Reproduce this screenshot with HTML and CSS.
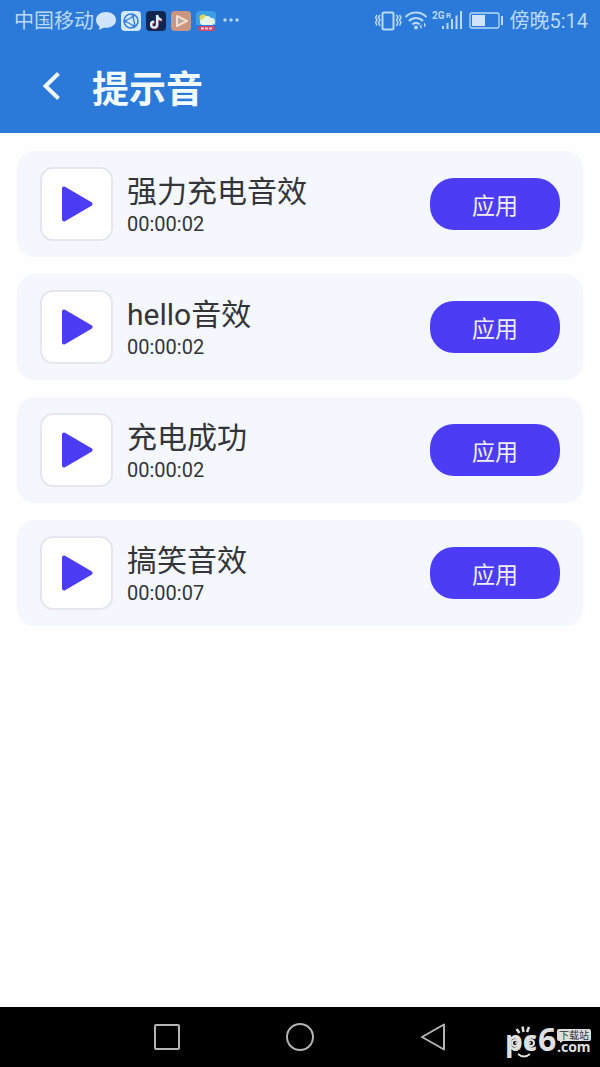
FILE: index.html
```html
<!DOCTYPE html>
<html lang="zh-CN">
<head>
<meta charset="utf-8">
<meta name="viewport" content="width=device-width, initial-scale=1">
<title>提示音</title>
<link rel="stylesheet" href="styles.css">
</head>
<body>
<div class="screen">
  <header class="top">
    <div class="status">
      <div class="status-side">
        <span>中国移动</span>
        <svg class="notices" width="146" height="22" viewBox="0 0 146 22" aria-hidden="true">
          <path d="M10 2C4.500 2 0 5.500 0 10c0 3 1.500 5 3.500 6.500L3 20l4.500-2.300C15 18.500 20 15 20 10S15.500 2 10 2z" fill="#cfe5fb"/>
          <rect x="25" y="1" width="20" height="20" rx="4" fill="#d3e8fb"/>
          <circle cx="35" cy="11" r="7" fill="none" stroke="#327fdc" stroke-width="1.500"/>
          <path d="M29 11l8-4.500M29 11l9 5M37 6.500l2 9" fill="none" stroke="#327fdc" stroke-width="1.300"/>
          <circle cx="29.500" cy="11" r="1.500" fill="#327fdc"/><circle cx="37" cy="6" r="1.500" fill="#327fdc"/><circle cx="38" cy="16" r="1.500" fill="#327fdc"/>
          <rect x="50" y="1" width="20" height="20" rx="4" fill="#11264f"/>
          <path d="M61 5v9.500a3 3 0 1 1-3-3M61 5c.500 3 2 4.500 4.500 4.700" fill="none" stroke="#e05b7d" stroke-width="2.400" transform="translate(.7 .6)"/>
          <path d="M61 5v9.500a3 3 0 1 1-3-3M61 5c.500 3 2 4.500 4.500 4.700" fill="none" stroke="#d8f3fb" stroke-width="2.200"/>
          <rect x="75" y="1" width="20" height="20" rx="4" fill="#c9967f"/>
          <path d="M81 6l10 5-10 5z" fill="#b7a69f" stroke="#f2ddd0" stroke-width="2" stroke-linejoin="round"/>
          <rect x="100" y="1" width="20" height="20" rx="4" fill="#3da0e4"/>
          <path d="M100 15h20v2a4 4 0 0 1-4 4h-12a4 4 0 0 1-4-4z" fill="#2878d7"/>
          <circle cx="107" cy="8" r="3.500" fill="#e2d65b"/>
          <path d="M107 15a3 3 0 0 1 0-6 4.500 4.500 0 0 1 8-1 3.500 3.500 0 0 1 1 7z" fill="#e5f5e7"/>
          <rect x="102" y="16" width="17" height="5" rx="2" fill="#c94769"/>
          <path d="M105 18.500h11" stroke="#f2cbdc" stroke-width="2" stroke-dasharray="3 1"/>
          <g fill="#b9dafa"><circle cx="129" cy="10" r="1.700"/><circle cx="135" cy="10" r="1.700"/><circle cx="141" cy="10" r="1.700"/></g>
        </svg>
      </div>
      <div class="status-side">
        <svg width="132" height="24" viewBox="1 0 132 24" fill="none" stroke="#b9dafa" aria-hidden="true">
          <rect x="8.500" y="3.500" width="11" height="17" rx="1.500" stroke-width="2"/>
          <path d="M3 6L1.500 8.500 3 11l-1.500 2.500L3 16.500M6 6L4.500 8.500 6 11l-1.500 2.500L6 17M22.500 6L24 8.500 22.500 11l1.500 2.500-1.500 3.500M25.500 6L27 8.500 25.500 11l1.500 2.500-1.500 3" stroke-width="1.500"/>
          <path d="M31.500 8c6-6 15-6 21 0M35 12c4-4 10-4 14 0M38.500 15.500c2-2.300 5-2.300 7 0" stroke-width="2.200"/>
          <circle cx="42" cy="18.500" r="1.900" fill="#b9dafa" stroke="none"/>
          <path d="M47.500 15v5l-2-2.500zM50 13.500v5l2-2.500z" fill="#b9dafa" stroke="none"/>
          <g fill="#b9dafa" stroke="none" class="network"><text x="58" y="10">2G</text><text x="72" y="9" class="roaming">R</text></g>
          <path d="M69 17v3M73.500 14v6M78 10v10M82.500 6.500V20M87 2v18" stroke-width="2"/>
          <rect x="96" y="4" width="29" height="15" rx="2" stroke-width="1.300"/>
          <path d="M98 6h13v11H98z" fill="#cfe5fb" stroke="none"/><path d="M128 7v9" stroke-width="2"/>
        </svg>
        <time class="clock">傍晚5:14</time>
      </div>
    </div>
    <div class="titlebar">
      <button class="back" aria-label="返回">
        <svg width="18" height="30" viewBox="0 0 18 30" aria-hidden="true"><path d="M16.500 2.500L3.500 15l13 12.500" fill="none" stroke="#f1faff" stroke-width="4"/></svg>
      </button>
      <h1>提示音</h1>
    </div>
  </header>

  <main class="sounds">
    <article class="card">
      <button class="play" aria-label="播放 强力充电音效"><svg width="32" height="36" viewBox="0 0 32 36" aria-hidden="true"><path d="M3 2.500v31L29.500 18z"/></svg></button>
      <div class="info"><h2>强力充电音效</h2><p>00:00:02</p></div>
      <button class="apply">应用</button>
    </article>
    <article class="card">
      <button class="play" aria-label="播放 hello音效"><svg width="32" height="36" viewBox="0 0 32 36" aria-hidden="true"><path d="M3 2.500v31L29.500 18z"/></svg></button>
      <div class="info"><h2>hello音效</h2><p>00:00:02</p></div>
      <button class="apply">应用</button>
    </article>
    <article class="card">
      <button class="play" aria-label="播放 充电成功"><svg width="32" height="36" viewBox="0 0 32 36" aria-hidden="true"><path d="M3 2.500v31L29.500 18z"/></svg></button>
      <div class="info"><h2>充电成功</h2><p>00:00:02</p></div>
      <button class="apply">应用</button>
    </article>
    <article class="card">
      <button class="play" aria-label="播放 搞笑音效"><svg width="32" height="36" viewBox="0 0 32 36" aria-hidden="true"><path d="M3 2.500v31L29.500 18z"/></svg></button>
      <div class="info"><h2>搞笑音效</h2><p>00:00:07</p></div>
      <button class="apply">应用</button>
    </article>
  </main>

  <nav class="navbar" aria-label="系统导航">
    <button aria-label="最近任务"><svg width="30" height="30" viewBox="0 0 30 30"><rect x="3" y="3" width="24" height="24" rx="1"/></svg></button>
    <button aria-label="主屏幕"><svg width="30" height="30" viewBox="0 0 30 30"><circle cx="15" cy="15" r="13"/></svg></button>
    <button aria-label="返回"><svg width="30" height="30" viewBox="0 0 30 30"><path d="M26 2.500v25L4 15z"/></svg></button>
    <div class="watermark">
      <svg width="88" height="52" viewBox="0 -12 88 52" role="img" aria-label="pc6下载站.com">
        <g class="logo-type">
          <text x="0" y="27" class="logo-main">pc</text>
          <text x="33" y="27" class="logo-six">6</text>
          <text x="52" y="28" class="logo-com">.com</text>
        </g>
        <path d="M14.500 9l-3-4M18.500 8l-1-5.500M22 8l2-5" stroke="#e0e0e0" stroke-width="2.500"/>
        <path d="M13 30q6 5 12 0" fill="none" stroke="#e0e0e0" stroke-width="2"/>
        <circle cx="10" cy="19" r="3" fill="#111" stroke="#e0e0e0" stroke-width="2"/><circle cx="26" cy="19" r="3" fill="#111" stroke="#e0e0e0" stroke-width="2"/>
        <circle cx="11" cy="19" r="1" fill="#e0e0e0"/><circle cx="25" cy="19" r="1" fill="#e0e0e0"/>
        <path d="M54 5h30a2 2 0 0 1 2 2v8a2 2 0 0 1-2 2H58l-3 2v-2h-1a2 2 0 0 1-2-2V7a2 2 0 0 1 2-2z" fill="#dedede"/>
        <text x="54" y="15" class="logo-tag">下载站</text>
      </svg>
    </div>
  </nav>
</div>
</body>
</html>
```

FILE: styles.css
```css
* { box-sizing: border-box; }

body {
  margin: 0;
  background: #fefefe;
  color: #333539;
  font-family: Roboto, "Noto Sans CJK SC", sans-serif;
}

button {
  padding: 0;
  border: 0;
  background: none;
  color: inherit;
  font: inherit;
  cursor: pointer;
}

svg { display: block; flex: none; }
h1, h2, p { margin: 0; }

.screen {
  min-height: 100vh;
  display: flex;
  flex-direction: column;
}

.top { background: #2b79d9; }

.status {
  height: 42px;
  padding: 0 12px 0 14px;
  display: flex;
  align-items: center;
  justify-content: space-between;
  color: #b9dafa;
  font-size: 20px;
  line-height: 24px;
}

.status-side {
  display: flex;
  align-items: center;
  gap: 2px;
}

.network { font-size: 10px; font-weight: 700; }
.roaming { font-size: 8px; }

.titlebar {
  height: 91px;
  padding: 0 42px 4px;
  display: flex;
  align-items: center;
  gap: 32px;
  color: #f1faff;
}

.titlebar h1 {
  padding-top: 10px;
  font-size: 37px;
  line-height: 44px;
  font-weight: 700;
}

.sounds {
  flex: 1;
  padding: 18px 17px;
  display: flex;
  flex-direction: column;
  gap: 17px;
}

.card {
  padding: 16px 23px;
  display: flex;
  align-items: center;
  gap: 14px;
  border-radius: 18px;
  background: #f4f7fe;
}

.play {
  width: 73px;
  height: 74px;
  display: grid;
  place-items: center;
  border: 2px solid #e6e6ec;
  border-radius: 13px;
  background: #fff;
}

.play path {
  fill: #4c3cf6;
  stroke: #4c3cf6;
  stroke-width: 4;
  stroke-linejoin: round;
}

.info { flex: 1; }

.info h2 {
  font-size: 30px;
  line-height: 40px;
  font-weight: 400;
}

.info p {
  font-size: 20px;
  line-height: 24px;
}

.apply {
  width: 130px;
  height: 52px;
  border-radius: 24px;
  background: #4c3cf6;
  color: #f0efff;
  font-size: 23px;
}

.navbar {
  position: relative;
  height: 60px;
  display: flex;
  align-items: center;
  justify-content: center;
  gap: 103px;
  background: #000;
}

.navbar button svg {
  fill: none;
  stroke: #b4b4b4;
  stroke-width: 2;
  stroke-linejoin: round;
}

.watermark {
  position: absolute;
  right: 7px;
  bottom: 3px;
}

.logo-type { fill: #e0e0e0; font-family: "Open Sans", sans-serif; font-weight: 700; }
.logo-main { font-size: 28px; }
.logo-six { font-size: 32px; }
.logo-com { font-size: 14px; }
.logo-tag { fill: #333; font-size: 10px; font-weight: 400; }
```
